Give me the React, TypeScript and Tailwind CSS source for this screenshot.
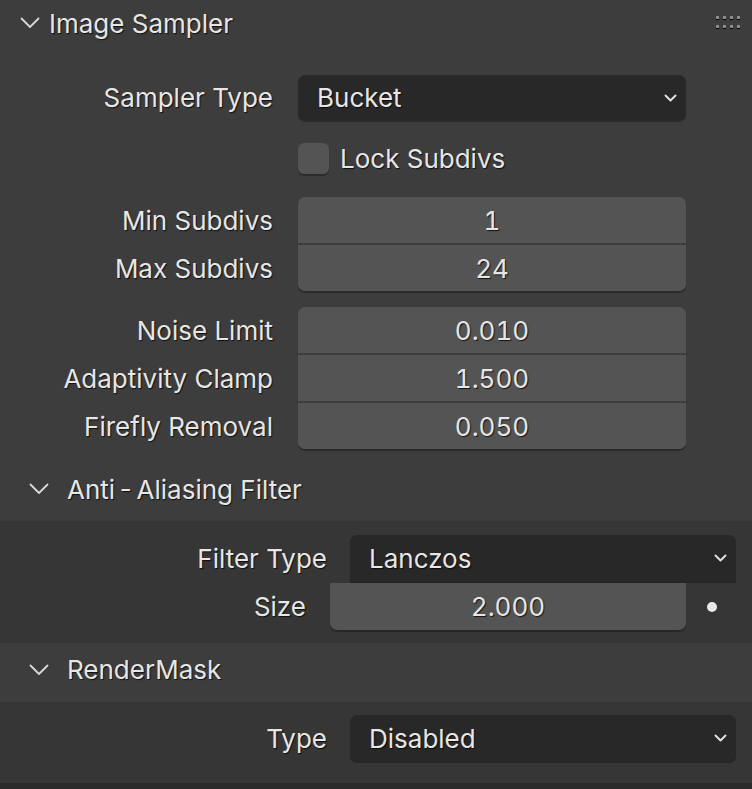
import React from 'react';

const shadowText = '[text-shadow:1px_1px_1px_rgba(0,0,0,0.75)]';

const Chevron = ({ className = '' }: { className?: string }) => (
  <svg width="20" height="12" viewBox="0 0 20 12" className={className}>
    <path d="M1.5 1.5 L10 10 L18.5 1.5" fill="none" stroke="#d8d8d8" strokeWidth="1.8" strokeLinecap="round" strokeLinejoin="round" />
  </svg>
);

const SmallChevron = () => (
  <svg width="13" height="8" viewBox="0 0 13 8">
    <path d="M1.5 1.5 L6.5 6.5 L11.5 1.5" fill="none" stroke="#e0e0e0" strokeWidth="2" strokeLinecap="round" strokeLinejoin="round" />
  </svg>
);

const Label = ({ text, width }: { text: string; width: string }) => (
  <div className={`${width} shrink-0 text-right ${shadowText}`}>{text}</div>
);

const Dropdown = ({ value, rounded = 'rounded-[7px]' }: { value: string; rounded?: string }) => (
  <div className={`flex-1 h-full bg-[#282828] ${rounded} flex items-center justify-between pl-[19px] pr-[9px] shadow-[0_2px_1px_rgba(0,0,0,0.3)]`}>
    <span className={shadowText}>{value}</span>
    <SmallChevron />
  </div>
);

const Field = ({ value, rounded }: { value: string; rounded: string }) => (
  <div className={`h-[46px] bg-[#545454] ${rounded} flex items-center justify-center tabular-nums ${shadowText}`}>
    {value}
  </div>
);

const DragHandle = () => (
  <div className="grid grid-cols-4 gap-x-[4px] gap-y-[5px]">
    {Array.from({ length: 8 }).map((_, i) => (
      <div key={i} className="w-[3px] h-[4px] bg-[#8c8c8c] border-b border-black" />
    ))}
  </div>
);

export default function App() {
  return (
    <div className="w-[752px] h-[789px] bg-[#3d3d3d] text-[#e6e6e6] text-[26px] font-['Inter','Noto_Sans',sans-serif] overflow-hidden flex flex-col">
      {/* main panel header */}
      <div className="h-[46px] shrink-0 flex items-center pl-[20px] pr-[12px]">
        <Chevron />
        <span className={`ml-[9px] ${shadowText}`}>Image Sampler</span>
        <div className="ml-auto mb-[2px]">
          <DragHandle />
        </div>
      </div>

      <div className="flex flex-col pr-[66px]">
        <div className="mt-[29px] h-[45px] flex items-center">
          <Label text="Sampler Type" width="w-[273px]" />
          <div className="ml-[25px] flex-1 h-full flex">
            <Dropdown value="Bucket" />
          </div>
        </div>

        <div className="mt-[23px] h-[31px] flex items-center pl-[298px]">
          <div className="w-[31px] h-[31px] rounded-[6px] bg-[#545454] shadow-[0_2px_1px_rgba(0,0,0,0.3)]" />
          <span className={`ml-[11px] ${shadowText}`}>Lock Subdivs</span>
        </div>

        <div className="mt-[23px] flex">
          <div className="w-[273px] flex flex-col gap-[2px]">
            <div className="h-[46px] flex items-center justify-end"><span className={shadowText}>Min Subdivs</span></div>
            <div className="h-[46px] flex items-center justify-end"><span className={shadowText}>Max Subdivs</span></div>
          </div>
          <div className="ml-[25px] flex-1 flex flex-col gap-[2px] rounded-[7px] shadow-[0_2px_1px_rgba(0,0,0,0.3)]">
            <Field value="1" rounded="rounded-t-[7px]" />
            <Field value="24" rounded="rounded-b-[7px]" />
          </div>
        </div>

        <div className="mt-[16px] flex">
          <div className="w-[273px] flex flex-col gap-[2px]">
            <div className="h-[46px] flex items-center justify-end"><span className={shadowText}>Noise Limit</span></div>
            <div className="h-[46px] flex items-center justify-end"><span className={shadowText}>Adaptivity Clamp</span></div>
            <div className="h-[46px] flex items-center justify-end"><span className={shadowText}>Firefly Removal</span></div>
          </div>
          <div className="ml-[25px] flex-1 flex flex-col gap-[2px] rounded-[7px] shadow-[0_2px_1px_rgba(0,0,0,0.3)]">
            <Field value="0.010" rounded="rounded-t-[7px]" />
            <Field value="1.500" rounded="rounded-none" />
            <Field value="0.050" rounded="rounded-b-[7px]" />
          </div>
        </div>
      </div>

      {/* Anti-Aliasing Filter */}
      <div className="mt-[10px] h-[62px] shrink-0 flex items-center pl-[29px] pb-[2px]">
        <Chevron />
        <span className={`ml-[18px] ${shadowText}`}>Anti{'\u2009'}-{'\u2009'}Aliasing Filter</span>
      </div>
      <div className="bg-[#363636] pt-[14px] pb-[13px] pr-[16px] flex flex-col">
        <div className="h-[46px] flex items-center">
          <Label text="Filter Type" width="w-[327px]" />
          <div className="ml-[23px] flex-1 h-full flex">
            <Dropdown value="Lanczos" rounded="rounded-t-[7px]" />
          </div>
        </div>
        <div className="mt-[2px] h-[47px] flex items-center">
          <Label text="Size" width="w-[306px]" />
          <div className="ml-[24px] w-[356px] h-full bg-[#545454] rounded-b-[7px] flex items-center justify-center tabular-nums shadow-[0_2px_1px_rgba(0,0,0,0.3)]">
            <span className={shadowText}>2.000</span>
          </div>
          <div className="ml-[21px] w-[10px] h-[10px] rounded-full bg-[#e8e8e8]" />
        </div>
      </div>

      {/* RenderMask */}
      <div className="h-[59px] shrink-0 flex items-center pl-[29px] pb-[6px]">
        <Chevron />
        <span className={`ml-[18px] ${shadowText}`}>RenderMask</span>
      </div>
      <div className="bg-[#363636] pt-[13px] h-[81px] pr-[16px] flex flex-col">
        <div className="h-[46px] flex items-center">
          <Label text="Type" width="w-[327px]" />
          <div className="ml-[23px] flex-1 h-full flex">
            <Dropdown value="Disabled" />
          </div>
        </div>
      </div>
      <div className="flex-1 bg-[#2b2b2b]" />
    </div>
  );
}
